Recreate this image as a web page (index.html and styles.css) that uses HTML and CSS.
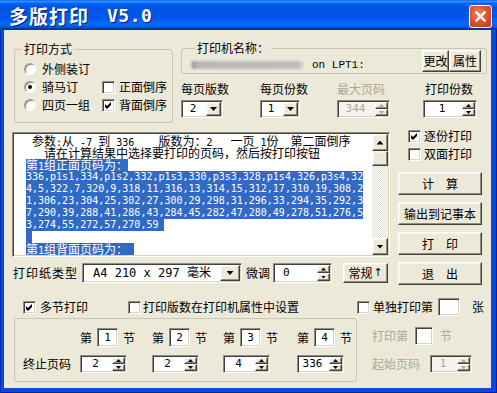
FILE: index.html
```html
<!DOCTYPE html>
<html>

<head>
    <title>多版打印 V5.0</title>
    <link rel="stylesheet" href="styles.css">
</head>

<body>
    <div class="window">
        <div class="titlebar">
            <span class="title-cn">多版打印</span>
            <span class="title-ver">V5.0</span>
            <div class="close-btn">
                <svg width="13" height="13" viewBox="0 0 13 13"><path d="M2.5 2.5 L10.5 10.5 M10.5 2.5 L2.5 10.5" stroke="#fff" stroke-width="2.4" stroke-linecap="square"/></svg>
            </div>
        </div>
        <div class="frame">
            <div class="client">

                <div class="top">
                    <div class="group mode-group">
                        <span class="group-title">打印方式</span>
                        <div class="mode-grid">
                            <div class="opt"><span class="radio"></span>外侧装订</div>
                            <div></div>
                            <div class="opt"><span class="radio on"></span>骑马订</div>
                            <div class="opt"><span class="check"></span>正面倒序</div>
                            <div class="opt"><span class="radio"></span>四页一组</div>
                            <div class="opt"><span class="check"><svg width="9" height="9" viewBox="0 0 9 9"><polygon points="1,3 3,5 7,1 7,4 3,8 1,6"/></svg></span>背面倒序</div>
                        </div>
                    </div>

                    <div class="printer-col">
                        <div class="group printer-group">
                            <span class="group-title printer-title">打印机名称：</span>
                            <span class="printer-blur"></span>
                            <span class="printer-port">on LPT1:</span>
                            <button class="btn btn-change">更改</button>
                            <button class="btn btn-prop">属性</button>
                        </div>
                        <div class="params">
                            <div class="param">
                                <span class="param-label">每页版数</span>
                                <div class="field combo combo-pages"><span class="field-val">2</span><span class="btn combo-btn"><i class="tri-down"></i></span></div>
                            </div>
                            <div class="param">
                                <span class="param-label">每页份数</span>
                                <div class="field combo combo-copies"><span class="field-val">1</span><span class="btn combo-btn"><i class="tri-down"></i></span></div>
                            </div>
                            <div class="param disabled">
                                <span class="param-label">最大页码</span>
                                <div class="field spin spin-max"><span class="field-val">344</span><span class="spin-btns"><span class="btn"><i class="tri-up-s"></i></span><span class="btn"><i class="tri-down-s"></i></span></span></div>
                            </div>
                            <div class="param param-last">
                                <span class="param-label">打印份数</span>
                                <div class="field spin spin-copies"><span class="field-val">1</span><span class="spin-btns"><span class="btn"><i class="tri-up-s"></i></span><span class="btn"><i class="tri-down-s"></i></span></span></div>
                            </div>
                        </div>
                    </div>
                </div>

                <div class="middle">
                    <div class="memo-col">
                        <div class="field memo">
                            <div class="memo-text">
                                <div class="ln"> <span class="cn">参数</span>:<span class="cn">从</span> -7 <span class="cn">到</span> 336    <span class="cn">版数为：</span>2   <span class="cn">一页</span> 1<span class="cn">份</span>  <span class="cn">第二面倒序</span></div>
                                <div class="ln">   <span class="cn">请在计算结果中选择要打印的页码，然后按打印按钮</span></div>
                                <div class="ln"><span class="sel"><span class="cn">第</span>1<span class="cn">组正面页码为：</span></span></div>
                                <div class="ln"><span class="sel">336,p1s1,334,p1s2,332,p1s3,330,p3s3,328,p1s4,326,p3s4,32</span></div>
                                <div class="ln"><span class="sel">4,5,322,7,320,9,318,11,316,13,314,15,312,17,310,19,308,2</span></div>
                                <div class="ln"><span class="sel">1,306,23,304,25,302,27,300,29,298,31,296,33,294,35,292,3</span></div>
                                <div class="ln"><span class="sel">7,290,39,288,41,286,43,284,45,282,47,280,49,278,51,276,5</span></div>
                                <div class="ln"><span class="sel">3,274,55,272,57,270,59 </span></div>
                                <div class="ln"><span class="sel"> </span></div>
                                <div class="ln"><span class="sel"><span class="cn">第</span>1<span class="cn">组背面页码为：</span> </span></div>
                            </div>
                            <div class="scrollbar">
                                <span class="btn sb-btn"><i class="tri-up"></i></span>
                                <span class="btn sb-thumb"></span>
                                <span class="sb-track"></span>
                                <span class="btn sb-btn"><i class="tri-down"></i></span>
                            </div>
                        </div>

                        <div class="paper-row">
                            <span class="paper-label">打印纸类型</span>
                            <div class="field combo combo-paper"><span class="paper-val">A4 210 x 297 <span class="cn">毫米</span></span><span class="btn combo-btn"><i class="tri-down"></i></span></div>
                            <span class="adjust-label">微调</span>
                            <div class="field spin spin-adjust"><span class="field-val">0</span><span class="spin-btns"><span class="btn"><i class="tri-up-s"></i></span><span class="btn"><i class="tri-down-s"></i></span></span></div>
                            <button class="btn btn-normal">常规<span class="arrow">↑</span></button>
                        </div>
                    </div>

                    <div class="side">
                        <div class="opt side-opt"><span class="check"><svg width="9" height="9" viewBox="0 0 9 9"><polygon points="1,3 3,5 7,1 7,4 3,8 1,6"/></svg></span>逐份打印</div>
                        <div class="opt side-opt"><span class="check"></span>双面打印</div>
                        <div class="side-buttons">
                            <button class="btn side-btn">计　算</button>
                            <button class="btn side-btn">输出到记事本</button>
                            <button class="btn side-btn">打　印</button>
                            <button class="btn side-btn">退　出</button>
                        </div>
                    </div>
                </div>

                <div class="bottom">
                    <div class="bottom-left">
                        <div class="multi-row">
                            <div class="opt"><span class="check"><svg width="9" height="9" viewBox="0 0 9 9"><polygon points="1,3 3,5 7,1 7,4 3,8 1,6"/></svg></span>多节打印</div>
                            <div class="opt opt-driver"><span class="check"></span>打印版数在打印机属性中设置</div>
                        </div>
                        <div class="group sections">
                            <span></span>
                            <div class="sec">第<span class="field num-box">1</span>节</div>
                            <div class="sec">第<span class="field num-box">2</span>节</div>
                            <div class="sec">第<span class="field num-box">3</span>节</div>
                            <div class="sec">第<span class="field num-box">4</span>节</div>
                            <span class="end-label">终止页码</span>
                            <div class="field spin spin-end"><span class="field-val">2</span><span class="spin-btns"><span class="btn"><i class="tri-up-s"></i></span><span class="btn"><i class="tri-down-s"></i></span></span></div>
                            <div class="field spin spin-end"><span class="field-val">2</span><span class="spin-btns"><span class="btn"><i class="tri-up-s"></i></span><span class="btn"><i class="tri-down-s"></i></span></span></div>
                            <div class="field spin spin-end"><span class="field-val">4</span><span class="spin-btns"><span class="btn"><i class="tri-up-s"></i></span><span class="btn"><i class="tri-down-s"></i></span></span></div>
                            <div class="field spin spin-end"><span class="field-val">336</span><span class="spin-btns"><span class="btn"><i class="tri-up-s"></i></span><span class="btn"><i class="tri-down-s"></i></span></span></div>
                        </div>
                    </div>

                    <div class="bottom-right">
                        <div class="single-row">
                            <div class="opt"><span class="check"></span>单独打印第</div>
                            <span class="field sheet-box"></span>
                            <span class="sheet-unit">张</span>
                        </div>
                        <div class="sub-row disabled">
                            <span>打印第</span>
                            <span class="field sec-box"></span>
                            <span class="sec-unit">节</span>
                        </div>
                        <div class="sub-row disabled">
                            <span>起始页码</span>
                            <div class="field spin spin-start"><span class="field-val">1</span><span class="spin-btns"><span class="btn"><i class="tri-up-s"></i></span><span class="btn"><i class="tri-down-s"></i></span></span></div>
                        </div>
                    </div>
                </div>

            </div>
        </div>
    </div>
</body>
</html>
```

FILE: styles.css
```css
* {
    box-sizing: border-box;
}

body {
    margin: 0;
    background: #fff;
    font-family: "Noto Sans CJK SC", sans-serif;
    font-size: 12px;
    line-height: 14px;
    color: #000;
}

button {
    font: inherit;
    color: inherit;
    padding: 0;
    margin: 0;
}

.window {
    width: 497px;
    height: 393px;
    display: flex;
    flex-direction: column;
}

/* title bar */
.titlebar {
    height: 30px;
    flex: none;
    display: flex;
    align-items: center;
    padding: 2px 5px 0 9px;
    color: #fff;
    background: linear-gradient(to bottom, #0058ee 0%, #3a93ff 4%, #288eff 6%, #127dff 8%, #036ffc 10%, #0262ee 14%, #0057e5 20%, #0054e3 24%, #0055eb 56%, #005bf5 66%, #026afe 76%, #0062ef 86%, #0052d6 92%, #0040ab 94%, #003092 100%);
}

.title-cn {
    font-weight: bold;
    font-size: 19px;
    line-height: 22px;
    letter-spacing: 1px;
    text-shadow: 1px 1px 0 #0a1883;
}

.title-ver {
    font-family: "DejaVu Sans Mono", monospace;
    font-weight: bold;
    font-size: 18px;
    line-height: 22px;
    margin-left: 18px;
    letter-spacing: 0.5px;
    text-shadow: 1px 1px 0 #0a1883;
}

.close-btn {
    margin-left: auto;
    width: 23px;
    height: 23px;
    border: 1px solid #fff;
    border-radius: 3px;
    display: flex;
    align-items: center;
    justify-content: center;
    background: radial-gradient(circle at 40% 35%, #ec8a6a 0%, #e0542e 45%, #c7391a 100%);
}

.frame {
    flex: 1;
    display: flex;
    padding: 0 6px 5px 4px;
    background: #0a49dc;
    box-shadow: inset 1px 0 0 #0831b0, inset -1px 0 0 #001e9a, inset 0 -1px 0 #001e9a;
}

.client {
    flex: 1;
    background: #ece9d8;
}

/* shared controls */
.group {
    position: relative;
    border: 1px solid #c9c6b6;
    border-radius: 3px;
}

.group-title {
    position: absolute;
    top: -8px;
    left: 7px;
    padding: 0 2px;
    background: #ece9d8;
}

.btn {
    background: #ece9d8;
    border: 1px solid;
    border-color: #fff #404040 #404040 #fff;
    box-shadow: inset -1px -1px 0 #8f8c80, inset 1px 1px 0 #f5f4ee;
    display: flex;
    align-items: center;
    justify-content: center;
}

.field {
    background: #fff;
    border: 1px solid;
    border-color: #8f8c80 #fff #fff #8f8c80;
    box-shadow: inset 1px 1px 0 #404040, inset -1px -1px 0 #d8d4c4;
}

.opt {
    display: flex;
    align-items: center;
    gap: 4px;
    white-space: nowrap;
}

.radio {
    width: 12px;
    height: 12px;
    margin-right: 2px;
    border-radius: 50%;
    background: #fff;
    border: 1px solid;
    border-color: #a09d90 #fff #fff #a09d90;
    box-shadow: inset 1px 1px 0 #8a877c;
    display: flex;
    align-items: center;
    justify-content: center;
}

.radio.on::after {
    content: "";
    width: 4px;
    height: 4px;
    border-radius: 50%;
    background: #000;
}

.check {
    width: 13px;
    height: 13px;
    flex: none;
    background: #fff;
    border: 1px solid;
    border-color: #8f8c80 #fff #fff #8f8c80;
    box-shadow: inset 1px 1px 0 #404040, inset -1px -1px 0 #d8d4c4;
    padding: 1px;
    display: flex;
}

.tri-down,
.tri-up {
    display: block;
    width: 7px;
    height: 4px;
    background: #000;
    clip-path: polygon(0 0, 100% 0, 50% 100%);
}

.tri-up {
    clip-path: polygon(50% 0, 100% 100%, 0 100%);
}

.tri-down-s,
.tri-up-s {
    display: block;
    width: 5px;
    height: 3px;
    background: #000;
    clip-path: polygon(0 0, 100% 0, 50% 100%);
}

.tri-up-s {
    clip-path: polygon(50% 0, 100% 100%, 0 100%);
}

.combo,
.spin {
    display: flex;
    height: 18px;
    padding: 1px;
}

.field-val {
    flex: 1;
    text-align: center;
    padding-right: 3px;
    font-family: "DejaVu Sans Mono", monospace;
    font-size: 11px;
    line-height: 14px;
}

.combo-btn {
    width: 15px;
}

.spin-btns {
    width: 13px;
    display: flex;
    flex-direction: column;
}

.spin-btns .btn {
    flex: 1;
}

.disabled {
    color: #aca899;
}

.disabled .field {
    background: #f4f3ee;
}

.disabled .tri-up-s,
.disabled .tri-down-s {
    background: #aca899;
}

/* top area */
.top {
    display: flex;
    align-items: flex-start;
    gap: 8px;
    padding: 18px 0 0 10px;
}

.mode-group {
    width: 159px;
    height: 74px;
    margin-top: 1px;
    padding: 9px 0 0 9px;
}

.mode-grid {
    display: grid;
    grid-template-columns: 78px auto;
    grid-template-rows: 19px 18px 18px;
    align-items: center;
}

.printer-col {
    width: 306px;
}

.printer-group {
    height: 26px;
    display: flex;
    align-items: center;
    padding: 0 5px 0 8px;
}

.printer-title {
    left: 13px;
}

.printer-blur {
    width: 115px;
    height: 8px;
    margin-top: 7px;
    border-radius: 4px;
    background: linear-gradient(90deg, #ece9d8 0, #9a9a9a 3px, #b9b9b9 8px, #bdbdbd 108px, #ece9d8 115px);
    filter: blur(1px);
}

.printer-port {
    margin: 8px 0 0 7px;
    font-family: "Liberation Mono", monospace;
    font-size: 11px;
}

.btn-change {
    margin-left: auto;
    width: 27px;
    height: 22px;
}

.btn-prop {
    width: 32px;
    height: 22px;
}

.params {
    display: grid;
    grid-template-columns: 79px 77px 86px auto;
    margin-top: 8px;
}

.param-label {
    display: block;
    height: 14px;
    margin-bottom: 4px;
}

.param-last .param-label {
    padding-left: 2px;
}

.combo-pages {
    width: 42px;
}

.combo-copies {
    width: 40px;
}

.spin-max {
    width: 53px;
}

.spin-copies {
    width: 54px;
}

/* memo and side buttons */
.middle {
    display: flex;
    margin-top: 4px;
}

.memo-col {
    padding: 5px 0 0 8px;
}

.memo {
    width: 378px;
    height: 125px;
    padding: 1px;
    display: flex;
}

.memo-text {
    flex: 1;
    padding: 1px 0 0 12px;
    font-family: "DejaVu Sans Mono", monospace;
    font-size: 10px;
}

.ln {
    height: 12px;
    line-height: 12px;
    white-space: pre;
}

.cn {
    font-family: "Noto Sans CJK SC", sans-serif;
    font-size: 12px;
    line-height: 12px;
}

.memo-text .cn {
    display: inline-block;
    height: 12px;
}

.sel {
    display: inline-block;
    height: 12px;
    vertical-align: top;
    background: #316ac5;
    color: #fff;
}

.scrollbar {
    width: 16px;
    display: flex;
    flex-direction: column;
}

.sb-btn {
    height: 17px;
}

.sb-thumb {
    height: 15px;
}

.sb-track {
    flex: 1;
    background: repeating-conic-gradient(#fff 0 25%, #e4e1d2 0 50%) 0 0 / 2px 2px;
}

.paper-row {
    display: flex;
    align-items: center;
    height: 20px;
    margin-top: 6px;
    padding-left: 1px;
}

.paper-label {
    width: 69px;
    letter-spacing: 1px;
}

.combo-paper {
    width: 160px;
    height: 20px;
}

.paper-val {
    flex: 1;
    padding-left: 9px;
    font-family: "DejaVu Sans Mono", monospace;
    font-size: 12px;
    line-height: 16px;
    white-space: pre;
}

.combo-paper .combo-btn {
    width: 20px;
}

.adjust-label {
    margin-left: 4px;
}

.spin-adjust {
    width: 59px;
    height: 20px;
    margin-left: 3px;
}

.spin-adjust .field-val {
    text-align: left;
    padding-left: 8px;
    line-height: 16px;
}

.btn-normal {
    width: 45px;
    height: 20px;
    margin-left: 11px;
}

.btn-normal .arrow {
    font-family: "DejaVu Sans", sans-serif;
    font-size: 11px;
    margin-left: 1px;
}

.side {
    width: 84px;
    margin-left: 8px;
    display: flex;
    flex-direction: column;
}

.side-opt {
    height: 18px;
    padding-left: 10px;
    gap: 3px;
}

.side-buttons {
    display: flex;
    flex-direction: column;
    gap: 7px;
    margin-top: 9px;
}

.side-btn {
    height: 23px;
}

/* bottom area */
.bottom {
    display: flex;
    margin-top: 12px;
}

.bottom-left {
    width: 353px;
    padding-left: 10px;
}

.multi-row {
    display: flex;
    align-items: center;
    height: 20px;
    padding-left: 9px;
}

.opt-driver {
    margin-left: 40px;
    gap: 2px;
}

.sections {
    height: 64px;
    margin-top: 1px;
    padding: 9px 0 0 8px;
    display: grid;
    grid-template-columns: 57px 72px 71px 74px auto;
    grid-template-rows: 19px 18px;
    row-gap: 8px;
    align-items: center;
}

.sec {
    display: flex;
    align-items: center;
    gap: 5px;
}

.num-box {
    width: 21px;
    height: 19px;
    text-align: center;
    font-family: "DejaVu Sans Mono", monospace;
    font-size: 11px;
    line-height: 17px;
}

.spin-end {
    width: 47px;
}

.bottom-right {
    display: flex;
    flex-direction: column;
}

.single-row {
    display: flex;
    align-items: center;
    height: 20px;
}

.single-row .opt {
    gap: 3px;
}

.sheet-box {
    width: 22px;
    height: 18px;
    margin-left: 5px;
}

.sheet-unit {
    margin-left: 12px;
}

.sub-row {
    display: flex;
    align-items: center;
    height: 20px;
    padding-left: 15px;
}

.sub-row + .sub-row {
    margin-top: 8px;
}

.single-row + .sub-row {
    margin-top: 9px;
}

.disabled .sec-box {
    width: 18px;
    height: 18px;
    margin-left: 7px;
    background: #fff;
}

.sec-unit {
    margin-left: 7px;
}

.spin-start {
    width: 42px;
    margin-left: 10px;
}
```
